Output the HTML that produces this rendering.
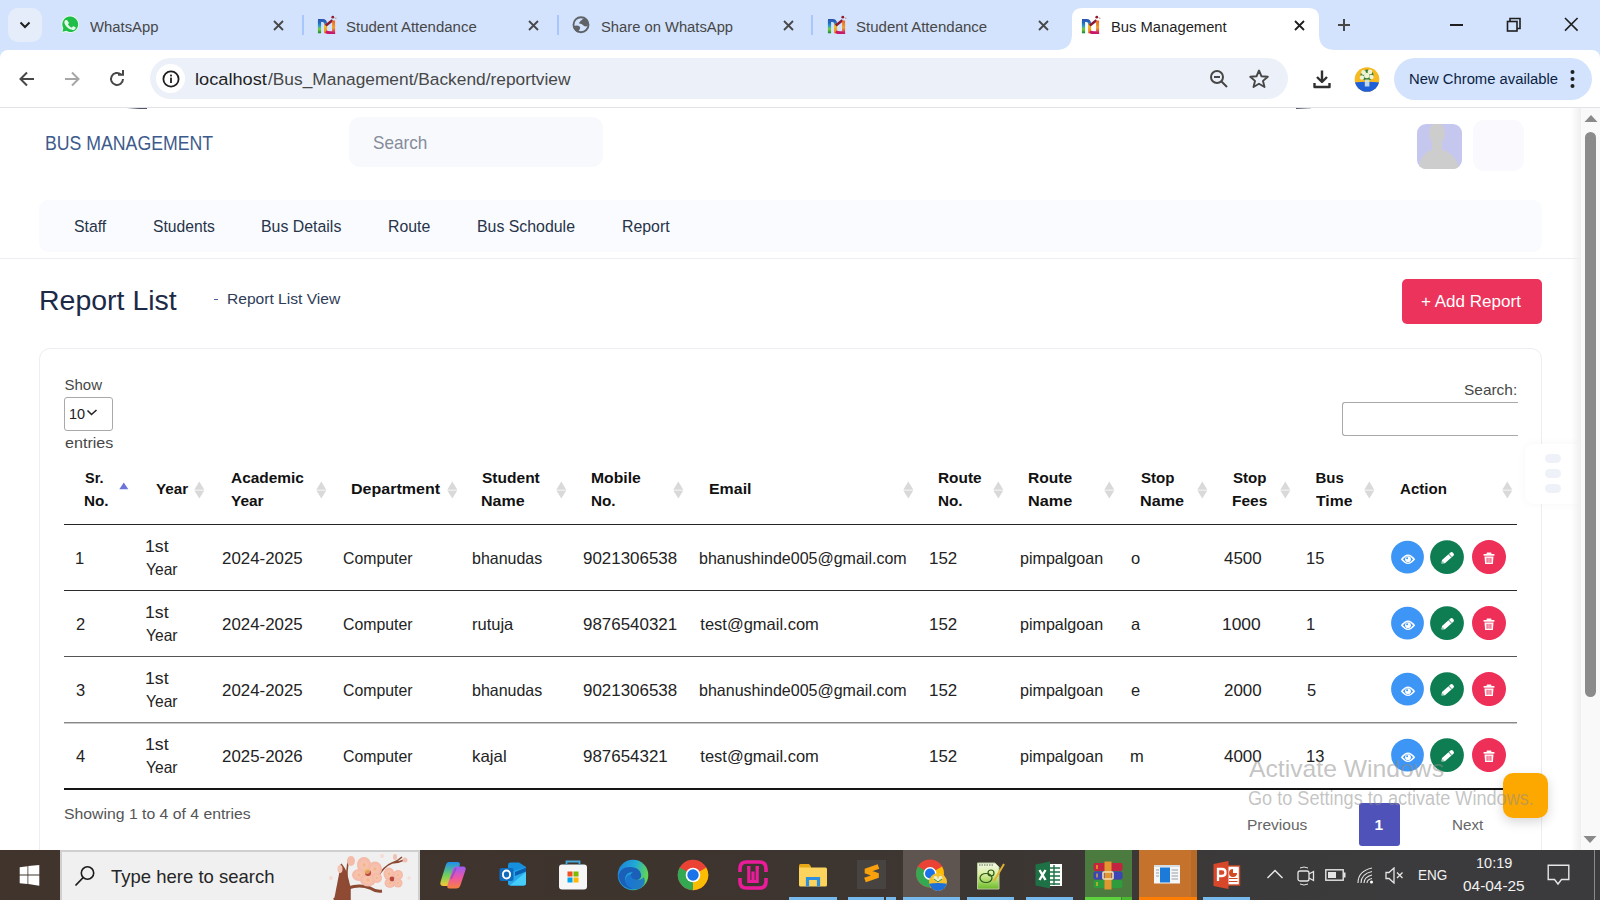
<!DOCTYPE html>
<html><head><meta charset="utf-8"><title>Bus Management</title>
<style>
html,body{margin:0;padding:0;width:1600px;height:900px;overflow:hidden;background:#fff;font-family:"Liberation Sans",sans-serif}
.ab{position:absolute;display:block}
.tx{position:absolute;white-space:nowrap;margin:0;padding:0}
</style></head><body>
<svg width="0" height="0" style="position:absolute"><defs><linearGradient id="gmv" x1="0" y1="5" x2="0" y2="18" gradientUnits="userSpaceOnUse"><stop offset="0" stop-color="#1d3f9a"/><stop offset=".45" stop-color="#2a9ad0"/><stop offset=".7" stop-color="#7ccf3a"/><stop offset="1" stop-color="#1f8a3a"/></linearGradient><linearGradient id="gmo" x1="0" y1="4" x2="0" y2="18" gradientUnits="userSpaceOnUse"><stop offset="0" stop-color="#2a4fb0"/><stop offset=".25" stop-color="#2a6fc0"/><stop offset=".5" stop-color="#f0c020"/><stop offset="1" stop-color="#f07a20"/></linearGradient><linearGradient id="gmr" x1="0" y1="5" x2="0" y2="18" gradientUnits="userSpaceOnUse"><stop offset="0" stop-color="#e8602a"/><stop offset=".6" stop-color="#f0a028"/><stop offset="1" stop-color="#c8186a"/></linearGradient></defs></svg>
<div class="ab" style="left:0;top:0;width:1600px;height:62px;background:#d3e3fd"></div>
<div class="ab" style="left:8px;top:8px;width:34px;height:34px;border-radius:10px;background:#e6edfa"></div>
<svg class="ab" style="left:19px;top:20px" width="12" height="10" viewBox="0 0 12 10"><path d="M1.5 2.5 L6 7 L10.5 2.5" fill="none" stroke="#1f1f1f" stroke-width="2"/></svg>
<svg class="ab" style="left:60px;top:14px" width="20" height="21" viewBox="0 0 20 21">
<path d="M10 1.6a8.7 8.7 0 0 0-7.6 12.9L1.5 19l4.6-1.1A8.7 8.7 0 1 0 10 1.6z" fill="#e6f8ea"/>
<path d="M10 2.6a7.7 7.7 0 0 0-6.7 11.5L2.6 17.7l3.7-.9A7.7 7.7 0 1 0 10 2.6z" fill="#1ebe48"/>
<path d="M7.3 6.4c-.3-.5-.5-.5-.8-.5h-.5c-.2 0-.5.1-.7.3-.3.3-.9.9-.9 2.2s1 2.6 1.1 2.8c.1.2 1.9 3 4.7 4.1 2.3.9 2.8.7 3.3.7.5-.1 1.6-.7 1.9-1.3.2-.7.2-1.2.2-1.3-.1-.1-.3-.2-.5-.3l-1.7-.8c-.2-.1-.4-.1-.6.1-.2.3-.7.8-.8 1-.2.2-.3.2-.5.1-.3-.1-1-.4-2-1.3-.8-.7-1.2-1.4-1.4-1.7-.1-.3 0-.4.1-.5l.4-.4c.1-.2.2-.3.3-.5.1-.2 0-.3 0-.4L7.3 6.4z" fill="#e6f8ea"/></svg>
<div class="tx" style="left:90.00px;top:18.06px;font-size:15.4px;line-height:17.202px;color:#474747;font-weight:400;font-family:'Liberation Sans',sans-serif;transform:scaleX(0.9653);transform-origin:0 0;">WhatsApp</div>
<svg class="ab" style="left:273.0px;top:19.5px" width="11" height="11" viewBox="-5.5 -5.5 11 11"><path d="M-4.5 -4.5L4.5 4.5M4.5 -4.5L-4.5 4.5" stroke="#474747" stroke-width="1.8" stroke-linecap="butt"/></svg>
<div class="ab" style="left:302px;top:15px;width:2px;height:20px;background:#a8c7fa"></div>
<svg class="ab" style="left:317px;top:15px" width="20" height="19" viewBox="0 0 20 19">
<path d="M2.5 18.3V5.5" stroke="url(#gmv)" stroke-width="3.2"/>
<path d="M1 5.5H5.5Q8.6 5.5 8.6 9V18.3" fill="none" stroke="url(#gmo)" stroke-width="3"/>
<path d="M8.8 10.5L15.5 5.2" stroke="#8e1b33" stroke-width="2.6"/>
<path d="M8.8 16.8Q12 18.5 18 17.2" fill="none" stroke="#c8186a" stroke-width="3"/>
<path d="M16.6 5.5V18.3" stroke="url(#gmr)" stroke-width="3"/>
<circle cx="15.8" cy="2.2" r="1.4" fill="#8e1b33"/><circle cx="18.8" cy="3.2" r="0.8" fill="#c89a80"/>
</svg>
<div class="tx" style="left:346.30px;top:18.06px;font-size:15.4px;line-height:17.202px;color:#474747;font-weight:400;font-family:'Liberation Sans',sans-serif;transform:scaleX(0.9729);transform-origin:0 0;">Student Attendance</div>
<svg class="ab" style="left:528.3px;top:19.5px" width="11" height="11" viewBox="-5.5 -5.5 11 11"><path d="M-4.5 -4.5L4.5 4.5M4.5 -4.5L-4.5 4.5" stroke="#474747" stroke-width="1.8" stroke-linecap="butt"/></svg>
<div class="ab" style="left:557px;top:15px;width:2px;height:20px;background:#a8c7fa"></div>
<svg class="ab" style="left:571px;top:15px" width="20" height="20" viewBox="0 0 20 20"><circle cx="10" cy="9.7" r="7.5" fill="none" stroke="#5f6368" stroke-width="1.9"/>
<path d="M7.8 8.2 Q9.5 5.5 11.5 4.2 Q14 2.8 16.5 5.5 Q18 8.5 16.6 11 Q14.5 12 12.8 10.8 Q11.5 9 7.8 8.2Z" fill="#5f6368"/><path d="M2.6 11.2 Q5.5 10 8.2 11 Q10 12.5 8.6 14.5 Q7.6 16.2 6.8 17.4 Q3.2 15.6 2.6 11.2Z" fill="#5f6368"/></svg>
<div class="tx" style="left:601.00px;top:18.06px;font-size:15.4px;line-height:17.202px;color:#474747;font-weight:400;font-family:'Liberation Sans',sans-serif;transform:scaleX(0.9586);transform-origin:0 0;">Share on WhatsApp</div>
<svg class="ab" style="left:783.0px;top:19.5px" width="11" height="11" viewBox="-5.5 -5.5 11 11"><path d="M-4.5 -4.5L4.5 4.5M4.5 -4.5L-4.5 4.5" stroke="#474747" stroke-width="1.8" stroke-linecap="butt"/></svg>
<div class="ab" style="left:811px;top:15px;width:2px;height:20px;background:#a8c7fa"></div>
<svg class="ab" style="left:827px;top:15px" width="20" height="19" viewBox="0 0 20 19">
<path d="M2.5 18.3V5.5" stroke="url(#gmv)" stroke-width="3.2"/>
<path d="M1 5.5H5.5Q8.6 5.5 8.6 9V18.3" fill="none" stroke="url(#gmo)" stroke-width="3"/>
<path d="M8.8 10.5L15.5 5.2" stroke="#8e1b33" stroke-width="2.6"/>
<path d="M8.8 16.8Q12 18.5 18 17.2" fill="none" stroke="#c8186a" stroke-width="3"/>
<path d="M16.6 5.5V18.3" stroke="url(#gmr)" stroke-width="3"/>
<circle cx="15.8" cy="2.2" r="1.4" fill="#8e1b33"/><circle cx="18.8" cy="3.2" r="0.8" fill="#c89a80"/>
</svg>
<div class="tx" style="left:856.00px;top:18.06px;font-size:15.4px;line-height:17.202px;color:#474747;font-weight:400;font-family:'Liberation Sans',sans-serif;transform:scaleX(0.9767);transform-origin:0 0;">Student Attendance</div>
<svg class="ab" style="left:1038.0px;top:19.5px" width="11" height="11" viewBox="-5.5 -5.5 11 11"><path d="M-4.5 -4.5L4.5 4.5M4.5 -4.5L-4.5 4.5" stroke="#474747" stroke-width="1.8" stroke-linecap="butt"/></svg>
<svg class="ab" style="left:1056px;top:8px" width="280" height="43" viewBox="0 0 280 43">
<path d="M0 42 Q8 42 12 38 Q16 34 16 26 V10 Q16 0 26 0 H253 Q263 0 263 10 V26 Q263 34 267 38 Q271 42 280 42 V43 H0Z" fill="#fff"/></svg>
<svg class="ab" style="left:1081px;top:15px" width="20" height="19" viewBox="0 0 20 19">
<path d="M2.5 18.3V5.5" stroke="url(#gmv)" stroke-width="3.2"/>
<path d="M1 5.5H5.5Q8.6 5.5 8.6 9V18.3" fill="none" stroke="url(#gmo)" stroke-width="3"/>
<path d="M8.8 10.5L15.5 5.2" stroke="#8e1b33" stroke-width="2.6"/>
<path d="M8.8 16.8Q12 18.5 18 17.2" fill="none" stroke="#c8186a" stroke-width="3"/>
<path d="M16.6 5.5V18.3" stroke="url(#gmr)" stroke-width="3"/>
<circle cx="15.8" cy="2.2" r="1.4" fill="#8e1b33"/><circle cx="18.8" cy="3.2" r="0.8" fill="#c89a80"/>
</svg>
<div class="tx" style="left:1110.64px;top:18.06px;font-size:15.4px;line-height:17.202px;color:#1f1f1f;font-weight:400;font-family:'Liberation Sans',sans-serif;transform:scaleX(0.9588);transform-origin:0 0;">Bus Management</div>
<svg class="ab" style="left:1293.5px;top:19.5px" width="11" height="11" viewBox="-5.5 -5.5 11 11"><path d="M-4.5 -4.5L4.5 4.5M4.5 -4.5L-4.5 4.5" stroke="#1f1f1f" stroke-width="1.8" stroke-linecap="butt"/></svg>
<svg class="ab" style="left:1337px;top:18px" width="14" height="14" viewBox="0 0 14 14"><path d="M7 1V13M1 7H13" stroke="#474747" stroke-width="2"/></svg>
<div class="ab" style="left:1450px;top:24px;width:13px;height:2px;background:#1f1f1f"></div>
<svg class="ab" style="left:1506px;top:17px" width="16" height="15" viewBox="0 0 16 15"><rect x="1.5" y="4.5" width="9.5" height="9.5" fill="none" stroke="#1f1f1f" stroke-width="1.6"/><path d="M4 4.5V1.5H14V11.5H11" fill="none" stroke="#1f1f1f" stroke-width="1.6"/></svg>
<svg class="ab" style="left:1564.0px;top:17.2px" width="14.6" height="14.6" viewBox="-7.3 -7.3 14.6 14.6"><path d="M-6.3 -6.3L6.3 6.3M6.3 -6.3L-6.3 6.3" stroke="#1f1f1f" stroke-width="1.6" stroke-linecap="butt"/></svg>
<div class="ab" style="left:0;top:50px;width:1600px;height:57px;background:#fff;border-radius:8px 8px 0 0"></div>
<div class="ab" style="left:0;top:107px;width:1600px;height:1px;background:#e1e3e6"></div>
<svg class="ab" style="left:18px;top:70px" width="18" height="18" viewBox="0 0 18 18"><path d="M16 9H3M9 2.5L2.5 9L9 15.5" fill="none" stroke="#474747" stroke-width="2"/></svg>
<svg class="ab" style="left:63px;top:70px" width="18" height="18" viewBox="0 0 18 18"><path d="M2 9H15M9 2.5L15.5 9L9 15.5" fill="none" stroke="#a6a6a6" stroke-width="2"/></svg>
<svg class="ab" style="left:108px;top:70px" width="18" height="18" viewBox="0 0 18 18"><path d="M15 9A6 6 0 1 1 13 4.5" fill="none" stroke="#474747" stroke-width="2"/><path d="M10 4.8H15V0" fill="none" stroke="#474747" stroke-width="2"/></svg>
<div class="ab" style="left:150px;top:58px;width:1138px;height:41px;border-radius:21px;background:#ecf1f9"></div>
<div class="ab" style="left:156px;top:64px;width:29px;height:29px;border-radius:50%;background:#fff"></div>
<svg class="ab" style="left:162px;top:70px" width="18" height="18" viewBox="0 0 18 18"><circle cx="9" cy="9" r="7.6" fill="none" stroke="#1f1f1f" stroke-width="1.8"/><rect x="8.1" y="7.6" width="1.8" height="5.4" fill="#1f1f1f"/><rect x="8.1" y="4.6" width="1.8" height="1.8" fill="#1f1f1f"/></svg>
<div class="tx" style="left:195.34px;top:70.23px;font-size:17.2px;line-height:19.212px;color:#1f1f1f;font-weight:400;font-family:'Liberation Sans',sans-serif;transform:scaleX(1.0588);transform-origin:0 0;">localhost</div>
<div class="tx" style="left:267.50px;top:70.23px;font-size:17.2px;line-height:19.212px;color:#474747;font-weight:400;font-family:'Liberation Sans',sans-serif;transform:scaleX(1.0081);transform-origin:0 0;">/Bus_Management/Backend/reportview</div>
<svg class="ab" style="left:1209px;top:69px" width="20" height="20" viewBox="0 0 20 20"><circle cx="8" cy="8" r="6" fill="none" stroke="#474747" stroke-width="2"/><path d="M12.5 12.5L18 18M5 8H11" stroke="#474747" stroke-width="2"/></svg>
<svg class="ab" style="left:1248px;top:68px" width="22" height="22" viewBox="0 0 22 22"><path d="M11 2.5L13.5 8.3L19.8 8.8L15 12.9L16.5 19L11 15.7L5.5 19L7 12.9L2.2 8.8L8.5 8.3Z" fill="none" stroke="#474747" stroke-width="1.9" stroke-linejoin="round"/></svg>
<svg class="ab" style="left:1311px;top:68px" width="22" height="22" viewBox="0 0 22 22"><path d="M11 2.5V13.5M6 9L11 14L16 9M3.5 15V19H18.5V15" fill="none" stroke="#303030" stroke-width="2.4" stroke-linejoin="round"/></svg>
<svg class="ab" style="left:1353.5px;top:66.5px" width="26" height="26" viewBox="0 0 26 26"><defs><clipPath id="ca"><circle cx="13" cy="12.5" r="12.3"/></clipPath></defs>
<g clip-path="url(#ca)"><rect width="26" height="26" fill="#f6b922"/><path d="M0 15.5 Q13 14 26 15.5 V26 H0Z" fill="#1f5fd8"/>
<ellipse cx="13" cy="8" rx="6.5" ry="5.5" fill="#3d7a2c"/><g fill="#eef3d6"><circle cx="9.5" cy="5.5" r="2.4"/><circle cx="16" cy="5" r="2.4"/><circle cx="12.8" cy="8.5" r="2.7"/><circle cx="8" cy="10.5" r="2.2"/><circle cx="17.5" cy="10" r="2.2"/></g>
<rect x="10.8" y="12.5" width="4.6" height="7" fill="#dcebe4" opacity=".85"/></g></svg>
<div class="ab" style="left:1394px;top:58px;width:198px;height:42px;border-radius:21px;background:#d3e3fd"></div>
<div class="tx" style="left:1408.74px;top:69.97px;font-size:15.5px;line-height:17.314px;color:#0b1f45;font-weight:400;font-family:'Liberation Sans',sans-serif;transform:scaleX(0.9559);transform-origin:0 0;">New Chrome available</div>
<svg class="ab" style="left:1569px;top:69px" width="7" height="20" viewBox="0 0 7 20"><circle cx="3.5" cy="3" r="2" fill="#1f1f1f"/><circle cx="3.5" cy="10" r="2" fill="#1f1f1f"/><circle cx="3.5" cy="17" r="2" fill="#1f1f1f"/></svg>
<div class="ab" style="left:127px;top:107.5px;width:20px;height:1.5px;background:linear-gradient(90deg,rgba(80,85,105,0),#50556a 60%,#50556a)"></div><div class="ab" style="left:1296px;top:107.5px;width:15px;height:1.5px;background:linear-gradient(90deg,#50556a,rgba(80,85,105,.2))"></div>
<div class="tx" style="left:45.42px;top:131.90px;font-size:20px;line-height:22.340px;color:#3d5a8c;font-weight:400;font-family:'Liberation Sans',sans-serif;transform:scaleX(0.8845);transform-origin:0 0;">BUS MANAGEMENT</div>
<div class="ab" style="left:349px;top:117px;width:254px;height:50px;border-radius:11px;background:#f8f9fd"></div>
<div class="tx" style="left:372.80px;top:132.66px;font-size:18.5px;line-height:20.665px;color:#868c9a;font-weight:400;font-family:'Liberation Sans',sans-serif;transform:scaleX(0.9258);transform-origin:0 0;">Search</div>
<svg class="ab" style="left:1417px;top:124px" width="45" height="45" viewBox="0 0 45 45"><defs><clipPath id="cav"><rect width="45" height="45" rx="9"/></clipPath></defs>
<g clip-path="url(#cav)"><rect width="45" height="45" fill="#c5c7ee"/><ellipse cx="20" cy="9.5" rx="7.8" ry="11" fill="#cdcdcd"/><path d="M1.5 46 Q3 27 20 24.5 Q38 27 43 46Z" fill="#cdcdcd"/><rect x="15" y="16" width="10" height="10" fill="#cdcdcd"/></g></svg>
<div class="ab" style="left:1473px;top:120px;width:51px;height:51px;border-radius:11px;background:#fafafe"></div>
<div class="ab" style="left:39px;top:200px;width:1503px;height:52px;border-radius:9px;background:#fafbfe"></div>
<div class="tx" style="left:73.50px;top:217.80px;font-size:16.8px;line-height:18.766px;color:#273449;font-weight:400;font-family:'Liberation Sans',sans-serif;transform:scaleX(0.9407);transform-origin:0 0;">Staff</div>
<div class="tx" style="left:152.50px;top:217.80px;font-size:16.8px;line-height:18.766px;color:#273449;font-weight:400;font-family:'Liberation Sans',sans-serif;transform:scaleX(0.9339);transform-origin:0 0;">Students</div>
<div class="tx" style="left:261.05px;top:217.80px;font-size:16.8px;line-height:18.766px;color:#273449;font-weight:400;font-family:'Liberation Sans',sans-serif;transform:scaleX(0.9463);transform-origin:0 0;">Bus Details</div>
<div class="tx" style="left:388.06px;top:217.80px;font-size:16.8px;line-height:18.766px;color:#273449;font-weight:400;font-family:'Liberation Sans',sans-serif;transform:scaleX(0.9437);transform-origin:0 0;">Route</div>
<div class="tx" style="left:477.05px;top:217.80px;font-size:16.8px;line-height:18.766px;color:#273449;font-weight:400;font-family:'Liberation Sans',sans-serif;transform:scaleX(0.9460);transform-origin:0 0;">Bus Schodule</div>
<div class="tx" style="left:621.55px;top:217.80px;font-size:16.8px;line-height:18.766px;color:#273449;font-weight:400;font-family:'Liberation Sans',sans-serif;transform:scaleX(0.9456);transform-origin:0 0;">Report</div>
<div class="ab" style="left:0;top:258px;width:1581px;height:1px;background:#eceef3"></div>
<div class="tx" style="left:38.63px;top:285.71px;font-size:27.5px;line-height:30.718px;color:#1c2a48;font-weight:400;font-family:'Liberation Sans',sans-serif;transform:scaleX(1.0355);transform-origin:0 0;">Report List</div>
<div class="ab" style="left:213.5px;top:298.5px;width:4.5px;height:1.5px;background:#4f64a8"></div>
<div class="tx" style="left:226.59px;top:289.97px;font-size:15.5px;line-height:17.314px;color:#2e3d58;font-weight:400;font-family:'Liberation Sans',sans-serif;transform:scaleX(1.0055);transform-origin:0 0;">Report List View</div>
<div class="ab" style="left:1402px;top:279px;width:140px;height:45px;border-radius:5px;background:#ec335b"></div>
<div class="tx" style="left:1421.00px;top:292.25px;font-size:17.4px;line-height:19.436px;color:#ffffff;font-weight:400;font-family:'Liberation Sans',sans-serif;transform:scaleX(0.9794);transform-origin:0 0;">+ Add Report</div>
<div class="ab" style="left:39px;top:348px;width:1501px;height:560px;border:1px solid #ededf4;border-radius:11px;background:#fff"></div>
<div class="tx" style="left:64.50px;top:376.93px;font-size:15px;line-height:16.755px;color:#474747;font-weight:400;font-family:'Liberation Sans',sans-serif;">Show</div>
<div class="ab" style="left:64px;top:397px;width:47px;height:32px;border:1px solid #a9a9a9;border-radius:3px;background:#fff"></div>
<div class="tx" style="left:68.87px;top:404.97px;font-size:15.5px;line-height:17.314px;color:#222;font-weight:400;font-family:'Liberation Sans',sans-serif;transform:scaleX(0.9326);transform-origin:0 0;">10</div>
<svg class="ab" style="left:86px;top:409px" width="12" height="8" viewBox="0 0 12 8"><path d="M1.5 1.5L5.5 5.5L10.5 1" fill="none" stroke="#222" stroke-width="1.6"/></svg>
<div class="tx" style="left:64.50px;top:435.23px;font-size:15px;line-height:16.755px;color:#474747;font-weight:400;font-family:'Liberation Sans',sans-serif;transform:scaleX(1.0736);transform-origin:0 0;">entries</div>
<div class="tx" style="left:1464.00px;top:382.03px;font-size:15px;line-height:16.755px;color:#474747;font-weight:400;font-family:'Liberation Sans',sans-serif;transform:scaleX(1.0292);transform-origin:0 0;">Search:</div>
<div class="ab" style="left:1342px;top:402px;width:175px;height:32px;border:1px solid #a9a9a9;border-right:none;border-radius:3px 0 0 3px;background:#fff"></div>
<div class="tx" style="left:85.00px;top:469.53px;font-size:15px;line-height:16.755px;color:#111;font-weight:700;font-family:'Liberation Sans',sans-serif;transform:scaleX(0.9624);transform-origin:0 0;">Sr.</div>
<div class="tx" style="left:83.98px;top:492.82px;font-size:15px;line-height:16.755px;color:#111;font-weight:700;font-family:'Liberation Sans',sans-serif;transform:scaleX(1.0176);transform-origin:0 0;">No.</div>
<div class="tx" style="left:155.60px;top:481.12px;font-size:15px;line-height:16.755px;color:#111;font-weight:700;font-family:'Liberation Sans',sans-serif;transform:scaleX(1.0138);transform-origin:0 0;">Year</div>
<div class="tx" style="left:230.60px;top:469.53px;font-size:15px;line-height:16.755px;color:#111;font-weight:700;font-family:'Liberation Sans',sans-serif;transform:scaleX(1.0280);transform-origin:0 0;">Academic</div>
<div class="tx" style="left:230.60px;top:492.82px;font-size:15px;line-height:16.755px;color:#111;font-weight:700;font-family:'Liberation Sans',sans-serif;transform:scaleX(1.0294);transform-origin:0 0;">Year</div>
<div class="tx" style="left:351.43px;top:481.12px;font-size:15px;line-height:16.755px;color:#111;font-weight:700;font-family:'Liberation Sans',sans-serif;transform:scaleX(1.0686);transform-origin:0 0;">Department</div>
<div class="tx" style="left:482.00px;top:469.53px;font-size:15px;line-height:16.755px;color:#111;font-weight:700;font-family:'Liberation Sans',sans-serif;transform:scaleX(1.0353);transform-origin:0 0;">Student</div>
<div class="tx" style="left:480.93px;top:492.82px;font-size:15px;line-height:16.755px;color:#111;font-weight:700;font-family:'Liberation Sans',sans-serif;transform:scaleX(1.0680);transform-origin:0 0;">Name</div>
<div class="tx" style="left:590.95px;top:469.53px;font-size:15px;line-height:16.755px;color:#111;font-weight:700;font-family:'Liberation Sans',sans-serif;transform:scaleX(1.0486);transform-origin:0 0;">Mobile</div>
<div class="tx" style="left:590.98px;top:492.82px;font-size:15px;line-height:16.755px;color:#111;font-weight:700;font-family:'Liberation Sans',sans-serif;transform:scaleX(1.0176);transform-origin:0 0;">No.</div>
<div class="tx" style="left:708.64px;top:481.12px;font-size:15px;line-height:16.755px;color:#111;font-weight:700;font-family:'Liberation Sans',sans-serif;transform:scaleX(1.0617);transform-origin:0 0;">Email</div>
<div class="tx" style="left:938.37px;top:469.53px;font-size:15px;line-height:16.755px;color:#111;font-weight:700;font-family:'Liberation Sans',sans-serif;transform:scaleX(1.0254);transform-origin:0 0;">Route</div>
<div class="tx" style="left:938.38px;top:492.82px;font-size:15px;line-height:16.755px;color:#111;font-weight:700;font-family:'Liberation Sans',sans-serif;transform:scaleX(1.0176);transform-origin:0 0;">No.</div>
<div class="tx" style="left:1028.36px;top:469.53px;font-size:15px;line-height:16.755px;color:#111;font-weight:700;font-family:'Liberation Sans',sans-serif;transform:scaleX(1.0400);transform-origin:0 0;">Route</div>
<div class="tx" style="left:1028.32px;top:492.82px;font-size:15px;line-height:16.755px;color:#111;font-weight:700;font-family:'Liberation Sans',sans-serif;transform:scaleX(1.0832);transform-origin:0 0;">Name</div>
<div class="tx" style="left:1140.70px;top:469.53px;font-size:15px;line-height:16.755px;color:#111;font-weight:700;font-family:'Liberation Sans',sans-serif;transform:scaleX(1.0072);transform-origin:0 0;">Stop</div>
<div class="tx" style="left:1139.62px;top:492.82px;font-size:15px;line-height:16.755px;color:#111;font-weight:700;font-family:'Liberation Sans',sans-serif;transform:scaleX(1.0781);transform-origin:0 0;">Name</div>
<div class="tx" style="left:1232.70px;top:469.53px;font-size:15px;line-height:16.755px;color:#111;font-weight:700;font-family:'Liberation Sans',sans-serif;transform:scaleX(1.0072);transform-origin:0 0;">Stop</div>
<div class="tx" style="left:1231.67px;top:492.82px;font-size:15px;line-height:16.755px;color:#111;font-weight:700;font-family:'Liberation Sans',sans-serif;transform:scaleX(1.0321);transform-origin:0 0;">Fees</div>
<div class="tx" style="left:1315.40px;top:469.53px;font-size:15px;line-height:16.755px;color:#111;font-weight:700;font-family:'Liberation Sans',sans-serif;">Bus</div>
<div class="tx" style="left:1316.40px;top:492.82px;font-size:15px;line-height:16.755px;color:#111;font-weight:700;font-family:'Liberation Sans',sans-serif;transform:scaleX(1.0466);transform-origin:0 0;">Time</div>
<div class="tx" style="left:1400.30px;top:481.12px;font-size:15px;line-height:16.755px;color:#111;font-weight:700;font-family:'Liberation Sans',sans-serif;transform:scaleX(1.0043);transform-origin:0 0;">Action</div>
<svg class="ab" style="left:119.3px;top:481.5px" width="10" height="17" viewBox="0 0 10 17"><path d="M0.3 7.2L4.8 0.6L9.3 7.2Z" fill="#6d74d9"/></svg>
<svg class="ab" style="left:194.2px;top:480.5px" width="11" height="18" viewBox="0 0 11 18"><path d="M0.3 8.7L5.3 0.6L10.3 8.7Z" fill="#d9d9d9"/><path d="M0.3 9.5L5.3 17.4L10.3 9.5Z" fill="#d9d9d9"/></svg>
<svg class="ab" style="left:315.7px;top:480.5px" width="11" height="18" viewBox="0 0 11 18"><path d="M0.3 8.7L5.3 0.6L10.3 8.7Z" fill="#d9d9d9"/><path d="M0.3 9.5L5.3 17.4L10.3 9.5Z" fill="#d9d9d9"/></svg>
<svg class="ab" style="left:446.7px;top:480.5px" width="11" height="18" viewBox="0 0 11 18"><path d="M0.3 8.7L5.3 0.6L10.3 8.7Z" fill="#d9d9d9"/><path d="M0.3 9.5L5.3 17.4L10.3 9.5Z" fill="#d9d9d9"/></svg>
<svg class="ab" style="left:555.7px;top:480.5px" width="11" height="18" viewBox="0 0 11 18"><path d="M0.3 8.7L5.3 0.6L10.3 8.7Z" fill="#d9d9d9"/><path d="M0.3 9.5L5.3 17.4L10.3 9.5Z" fill="#d9d9d9"/></svg>
<svg class="ab" style="left:672.7px;top:480.5px" width="11" height="18" viewBox="0 0 11 18"><path d="M0.3 8.7L5.3 0.6L10.3 8.7Z" fill="#d9d9d9"/><path d="M0.3 9.5L5.3 17.4L10.3 9.5Z" fill="#d9d9d9"/></svg>
<svg class="ab" style="left:902.5px;top:480.5px" width="11" height="18" viewBox="0 0 11 18"><path d="M0.3 8.7L5.3 0.6L10.3 8.7Z" fill="#d9d9d9"/><path d="M0.3 9.5L5.3 17.4L10.3 9.5Z" fill="#d9d9d9"/></svg>
<svg class="ab" style="left:993.1px;top:480.5px" width="11" height="18" viewBox="0 0 11 18"><path d="M0.3 8.7L5.3 0.6L10.3 8.7Z" fill="#d9d9d9"/><path d="M0.3 9.5L5.3 17.4L10.3 9.5Z" fill="#d9d9d9"/></svg>
<svg class="ab" style="left:1103.7px;top:480.5px" width="11" height="18" viewBox="0 0 11 18"><path d="M0.3 8.7L5.3 0.6L10.3 8.7Z" fill="#d9d9d9"/><path d="M0.3 9.5L5.3 17.4L10.3 9.5Z" fill="#d9d9d9"/></svg>
<svg class="ab" style="left:1196.7px;top:480.5px" width="11" height="18" viewBox="0 0 11 18"><path d="M0.3 8.7L5.3 0.6L10.3 8.7Z" fill="#d9d9d9"/><path d="M0.3 9.5L5.3 17.4L10.3 9.5Z" fill="#d9d9d9"/></svg>
<svg class="ab" style="left:1279.7px;top:480.5px" width="11" height="18" viewBox="0 0 11 18"><path d="M0.3 8.7L5.3 0.6L10.3 8.7Z" fill="#d9d9d9"/><path d="M0.3 9.5L5.3 17.4L10.3 9.5Z" fill="#d9d9d9"/></svg>
<svg class="ab" style="left:1364.1000000000001px;top:480.5px" width="11" height="18" viewBox="0 0 11 18"><path d="M0.3 8.7L5.3 0.6L10.3 8.7Z" fill="#d9d9d9"/><path d="M0.3 9.5L5.3 17.4L10.3 9.5Z" fill="#d9d9d9"/></svg>
<svg class="ab" style="left:1501.5px;top:480.5px" width="11" height="18" viewBox="0 0 11 18"><path d="M0.3 8.7L5.3 0.6L10.3 8.7Z" fill="#d9d9d9"/><path d="M0.3 9.5L5.3 17.4L10.3 9.5Z" fill="#d9d9d9"/></svg>
<div class="ab" style="left:64px;top:524px;width:1453px;height:1px;background:#262626"></div>
<div class="ab" style="left:64px;top:590px;width:1453px;height:1px;background:#2c2c2c"></div>
<div class="ab" style="left:64px;top:656px;width:1453px;height:1px;background:#555"></div>
<div class="ab" style="left:64px;top:722px;width:1453px;height:1px;background:#888"></div>
<div class="ab" style="left:64px;top:723px;width:1453px;height:1px;background:#c8c8c8"></div>
<div class="ab" style="left:64px;top:788px;width:1453px;height:2px;background:#151515"></div>
<div class="tx" style="left:75.00px;top:548.77px;font-size:16.5px;line-height:18.430px;color:#232323;font-weight:400;font-family:'Liberation Sans',sans-serif;">1</div>
<div class="tx" style="left:144.93px;top:537.17px;font-size:16.5px;line-height:18.430px;color:#232323;font-weight:400;font-family:'Liberation Sans',sans-serif;transform:scaleX(1.0734);transform-origin:0 0;">1st</div>
<div class="tx" style="left:146.00px;top:560.17px;font-size:16.5px;line-height:18.430px;color:#232323;font-weight:400;font-family:'Liberation Sans',sans-serif;transform:scaleX(0.9455);transform-origin:0 0;">Year</div>
<div class="tx" style="left:222.00px;top:548.77px;font-size:16.5px;line-height:18.430px;color:#232323;font-weight:400;font-family:'Liberation Sans',sans-serif;transform:scaleX(1.0225);transform-origin:0 0;">2024-2025</div>
<div class="tx" style="left:343.00px;top:548.77px;font-size:16.5px;line-height:18.430px;color:#232323;font-weight:400;font-family:'Liberation Sans',sans-serif;transform:scaleX(0.9596);transform-origin:0 0;">Computer</div>
<div class="tx" style="left:472.03px;top:548.77px;font-size:16.5px;line-height:18.430px;color:#232323;font-weight:400;font-family:'Liberation Sans',sans-serif;transform:scaleX(0.9686);transform-origin:0 0;">bhanudas</div>
<div class="tx" style="left:583.00px;top:548.77px;font-size:16.5px;line-height:18.430px;color:#232323;font-weight:400;font-family:'Liberation Sans',sans-serif;transform:scaleX(1.0263);transform-origin:0 0;">9021306538</div>
<div class="tx" style="left:699.33px;top:548.77px;font-size:16.5px;line-height:18.430px;color:#232323;font-weight:400;font-family:'Liberation Sans',sans-serif;transform:scaleX(0.9707);transform-origin:0 0;">bhanushinde005@gmail.com</div>
<div class="tx" style="left:928.98px;top:548.77px;font-size:16.5px;line-height:18.430px;color:#232323;font-weight:400;font-family:'Liberation Sans',sans-serif;transform:scaleX(1.0246);transform-origin:0 0;">152</div>
<div class="tx" style="left:1019.63px;top:548.77px;font-size:16.5px;line-height:18.430px;color:#232323;font-weight:400;font-family:'Liberation Sans',sans-serif;transform:scaleX(0.9746);transform-origin:0 0;">pimpalgoan</div>
<div class="tx" style="left:1131.00px;top:548.77px;font-size:16.5px;line-height:18.430px;color:#232323;font-weight:400;font-family:'Liberation Sans',sans-serif;">o</div>
<div class="tx" style="left:1223.50px;top:548.77px;font-size:16.5px;line-height:18.430px;color:#232323;font-weight:400;font-family:'Liberation Sans',sans-serif;transform:scaleX(1.0266);transform-origin:0 0;">4500</div>
<div class="tx" style="left:1306.00px;top:548.77px;font-size:16.5px;line-height:18.430px;color:#232323;font-weight:400;font-family:'Liberation Sans',sans-serif;">15</div>
<svg class="ab" style="left:1390px;top:540px" width="118" height="34" viewBox="0 0 118 34">
<circle cx="17.5" cy="17.1" r="16.4" fill="#3d95f5"/><circle cx="57" cy="17.1" r="16.9" fill="#0f7d52"/><circle cx="99" cy="17.1" r="17" fill="#ee2f58"/>
<path d="M10.8 19.2 Q18 9.7 25.2 19.2 Q18 28.7 10.8 19.2Z" fill="#fff"/><path d="M12.9 19.2 Q18 12.2 23.1 19.2 Q18 26.2 12.9 19.2Z" fill="#3d95f5"/><circle cx="18" cy="19.2" r="2.9" fill="#fff"/><circle cx="17.1" cy="18.3" r="1" fill="#3d95f5"/>
<g transform="translate(57.2 18.3) rotate(-42)"><path d="M-7.8 0 L-5 -2.2 H6.4 Q8 -2.2 8 -0.6 V0.6 Q8 2.2 6.4 2.2 H-5Z" fill="#fff"/><path d="M4 -2.4V2.4" stroke="#0f7d52" stroke-width="0.8"/><circle cx="-5.8" cy="0" r="0.6" fill="#0f7d52"/></g>
<rect x="93.6" y="14" width="10.8" height="1.7" fill="#fff"/><rect x="96.6" y="12.4" width="4.8" height="2" rx="0.6" fill="#fff"/><path d="M94.5 16.4H103.5L102.9 24.1H95.1Z" fill="#fff"/>
<path d="M97.1 17.8V22.8M99 17.8V22.8M100.9 17.8V22.8" stroke="#ee2f58" stroke-width="1"/></svg>
<div class="tx" style="left:76.00px;top:614.77px;font-size:16.5px;line-height:18.430px;color:#232323;font-weight:400;font-family:'Liberation Sans',sans-serif;">2</div>
<div class="tx" style="left:144.93px;top:603.17px;font-size:16.5px;line-height:18.430px;color:#232323;font-weight:400;font-family:'Liberation Sans',sans-serif;transform:scaleX(1.0734);transform-origin:0 0;">1st</div>
<div class="tx" style="left:146.00px;top:626.17px;font-size:16.5px;line-height:18.430px;color:#232323;font-weight:400;font-family:'Liberation Sans',sans-serif;transform:scaleX(0.9455);transform-origin:0 0;">Year</div>
<div class="tx" style="left:222.00px;top:614.77px;font-size:16.5px;line-height:18.430px;color:#232323;font-weight:400;font-family:'Liberation Sans',sans-serif;transform:scaleX(1.0225);transform-origin:0 0;">2024-2025</div>
<div class="tx" style="left:343.00px;top:614.77px;font-size:16.5px;line-height:18.430px;color:#232323;font-weight:400;font-family:'Liberation Sans',sans-serif;transform:scaleX(0.9596);transform-origin:0 0;">Computer</div>
<div class="tx" style="left:472.00px;top:614.77px;font-size:16.5px;line-height:18.430px;color:#232323;font-weight:400;font-family:'Liberation Sans',sans-serif;">rutuja</div>
<div class="tx" style="left:583.00px;top:614.77px;font-size:16.5px;line-height:18.430px;color:#232323;font-weight:400;font-family:'Liberation Sans',sans-serif;transform:scaleX(1.0263);transform-origin:0 0;">9876540321</div>
<div class="tx" style="left:700.30px;top:614.77px;font-size:16.5px;line-height:18.430px;color:#232323;font-weight:400;font-family:'Liberation Sans',sans-serif;">test@gmail.com</div>
<div class="tx" style="left:928.98px;top:614.77px;font-size:16.5px;line-height:18.430px;color:#232323;font-weight:400;font-family:'Liberation Sans',sans-serif;transform:scaleX(1.0246);transform-origin:0 0;">152</div>
<div class="tx" style="left:1019.63px;top:614.77px;font-size:16.5px;line-height:18.430px;color:#232323;font-weight:400;font-family:'Liberation Sans',sans-serif;transform:scaleX(0.9746);transform-origin:0 0;">pimpalgoan</div>
<div class="tx" style="left:1131.00px;top:614.77px;font-size:16.5px;line-height:18.430px;color:#232323;font-weight:400;font-family:'Liberation Sans',sans-serif;">a</div>
<div class="tx" style="left:1222.44px;top:614.77px;font-size:16.5px;line-height:18.430px;color:#232323;font-weight:400;font-family:'Liberation Sans',sans-serif;transform:scaleX(1.0555);transform-origin:0 0;">1000</div>
<div class="tx" style="left:1306.00px;top:614.77px;font-size:16.5px;line-height:18.430px;color:#232323;font-weight:400;font-family:'Liberation Sans',sans-serif;">1</div>
<svg class="ab" style="left:1390px;top:606px" width="118" height="34" viewBox="0 0 118 34">
<circle cx="17.5" cy="17.1" r="16.4" fill="#3d95f5"/><circle cx="57" cy="17.1" r="16.9" fill="#0f7d52"/><circle cx="99" cy="17.1" r="17" fill="#ee2f58"/>
<path d="M10.8 19.2 Q18 9.7 25.2 19.2 Q18 28.7 10.8 19.2Z" fill="#fff"/><path d="M12.9 19.2 Q18 12.2 23.1 19.2 Q18 26.2 12.9 19.2Z" fill="#3d95f5"/><circle cx="18" cy="19.2" r="2.9" fill="#fff"/><circle cx="17.1" cy="18.3" r="1" fill="#3d95f5"/>
<g transform="translate(57.2 18.3) rotate(-42)"><path d="M-7.8 0 L-5 -2.2 H6.4 Q8 -2.2 8 -0.6 V0.6 Q8 2.2 6.4 2.2 H-5Z" fill="#fff"/><path d="M4 -2.4V2.4" stroke="#0f7d52" stroke-width="0.8"/><circle cx="-5.8" cy="0" r="0.6" fill="#0f7d52"/></g>
<rect x="93.6" y="14" width="10.8" height="1.7" fill="#fff"/><rect x="96.6" y="12.4" width="4.8" height="2" rx="0.6" fill="#fff"/><path d="M94.5 16.4H103.5L102.9 24.1H95.1Z" fill="#fff"/>
<path d="M97.1 17.8V22.8M99 17.8V22.8M100.9 17.8V22.8" stroke="#ee2f58" stroke-width="1"/></svg>
<div class="tx" style="left:76.00px;top:680.77px;font-size:16.5px;line-height:18.430px;color:#232323;font-weight:400;font-family:'Liberation Sans',sans-serif;">3</div>
<div class="tx" style="left:144.93px;top:669.17px;font-size:16.5px;line-height:18.430px;color:#232323;font-weight:400;font-family:'Liberation Sans',sans-serif;transform:scaleX(1.0734);transform-origin:0 0;">1st</div>
<div class="tx" style="left:146.00px;top:692.17px;font-size:16.5px;line-height:18.430px;color:#232323;font-weight:400;font-family:'Liberation Sans',sans-serif;transform:scaleX(0.9455);transform-origin:0 0;">Year</div>
<div class="tx" style="left:222.00px;top:680.77px;font-size:16.5px;line-height:18.430px;color:#232323;font-weight:400;font-family:'Liberation Sans',sans-serif;transform:scaleX(1.0225);transform-origin:0 0;">2024-2025</div>
<div class="tx" style="left:343.00px;top:680.77px;font-size:16.5px;line-height:18.430px;color:#232323;font-weight:400;font-family:'Liberation Sans',sans-serif;transform:scaleX(0.9596);transform-origin:0 0;">Computer</div>
<div class="tx" style="left:472.03px;top:680.77px;font-size:16.5px;line-height:18.430px;color:#232323;font-weight:400;font-family:'Liberation Sans',sans-serif;transform:scaleX(0.9686);transform-origin:0 0;">bhanudas</div>
<div class="tx" style="left:583.00px;top:680.77px;font-size:16.5px;line-height:18.430px;color:#232323;font-weight:400;font-family:'Liberation Sans',sans-serif;transform:scaleX(1.0263);transform-origin:0 0;">9021306538</div>
<div class="tx" style="left:699.33px;top:680.77px;font-size:16.5px;line-height:18.430px;color:#232323;font-weight:400;font-family:'Liberation Sans',sans-serif;transform:scaleX(0.9707);transform-origin:0 0;">bhanushinde005@gmail.com</div>
<div class="tx" style="left:928.98px;top:680.77px;font-size:16.5px;line-height:18.430px;color:#232323;font-weight:400;font-family:'Liberation Sans',sans-serif;transform:scaleX(1.0246);transform-origin:0 0;">152</div>
<div class="tx" style="left:1019.63px;top:680.77px;font-size:16.5px;line-height:18.430px;color:#232323;font-weight:400;font-family:'Liberation Sans',sans-serif;transform:scaleX(0.9746);transform-origin:0 0;">pimpalgoan</div>
<div class="tx" style="left:1131.00px;top:680.77px;font-size:16.5px;line-height:18.430px;color:#232323;font-weight:400;font-family:'Liberation Sans',sans-serif;">e</div>
<div class="tx" style="left:1223.50px;top:680.77px;font-size:16.5px;line-height:18.430px;color:#232323;font-weight:400;font-family:'Liberation Sans',sans-serif;transform:scaleX(1.0266);transform-origin:0 0;">2000</div>
<div class="tx" style="left:1307.00px;top:680.77px;font-size:16.5px;line-height:18.430px;color:#232323;font-weight:400;font-family:'Liberation Sans',sans-serif;">5</div>
<svg class="ab" style="left:1390px;top:672px" width="118" height="34" viewBox="0 0 118 34">
<circle cx="17.5" cy="17.1" r="16.4" fill="#3d95f5"/><circle cx="57" cy="17.1" r="16.9" fill="#0f7d52"/><circle cx="99" cy="17.1" r="17" fill="#ee2f58"/>
<path d="M10.8 19.2 Q18 9.7 25.2 19.2 Q18 28.7 10.8 19.2Z" fill="#fff"/><path d="M12.9 19.2 Q18 12.2 23.1 19.2 Q18 26.2 12.9 19.2Z" fill="#3d95f5"/><circle cx="18" cy="19.2" r="2.9" fill="#fff"/><circle cx="17.1" cy="18.3" r="1" fill="#3d95f5"/>
<g transform="translate(57.2 18.3) rotate(-42)"><path d="M-7.8 0 L-5 -2.2 H6.4 Q8 -2.2 8 -0.6 V0.6 Q8 2.2 6.4 2.2 H-5Z" fill="#fff"/><path d="M4 -2.4V2.4" stroke="#0f7d52" stroke-width="0.8"/><circle cx="-5.8" cy="0" r="0.6" fill="#0f7d52"/></g>
<rect x="93.6" y="14" width="10.8" height="1.7" fill="#fff"/><rect x="96.6" y="12.4" width="4.8" height="2" rx="0.6" fill="#fff"/><path d="M94.5 16.4H103.5L102.9 24.1H95.1Z" fill="#fff"/>
<path d="M97.1 17.8V22.8M99 17.8V22.8M100.9 17.8V22.8" stroke="#ee2f58" stroke-width="1"/></svg>
<div class="tx" style="left:76.00px;top:746.77px;font-size:16.5px;line-height:18.430px;color:#232323;font-weight:400;font-family:'Liberation Sans',sans-serif;">4</div>
<div class="tx" style="left:144.93px;top:735.17px;font-size:16.5px;line-height:18.430px;color:#232323;font-weight:400;font-family:'Liberation Sans',sans-serif;transform:scaleX(1.0734);transform-origin:0 0;">1st</div>
<div class="tx" style="left:146.00px;top:758.17px;font-size:16.5px;line-height:18.430px;color:#232323;font-weight:400;font-family:'Liberation Sans',sans-serif;transform:scaleX(0.9455);transform-origin:0 0;">Year</div>
<div class="tx" style="left:222.00px;top:746.77px;font-size:16.5px;line-height:18.430px;color:#232323;font-weight:400;font-family:'Liberation Sans',sans-serif;transform:scaleX(1.0225);transform-origin:0 0;">2025-2026</div>
<div class="tx" style="left:343.00px;top:746.77px;font-size:16.5px;line-height:18.430px;color:#232323;font-weight:400;font-family:'Liberation Sans',sans-serif;transform:scaleX(0.9596);transform-origin:0 0;">Computer</div>
<div class="tx" style="left:471.98px;top:746.77px;font-size:16.5px;line-height:18.430px;color:#232323;font-weight:400;font-family:'Liberation Sans',sans-serif;transform:scaleX(1.0227);transform-origin:0 0;">kajal</div>
<div class="tx" style="left:583.00px;top:746.77px;font-size:16.5px;line-height:18.430px;color:#232323;font-weight:400;font-family:'Liberation Sans',sans-serif;transform:scaleX(1.0265);transform-origin:0 0;">987654321</div>
<div class="tx" style="left:700.30px;top:746.77px;font-size:16.5px;line-height:18.430px;color:#232323;font-weight:400;font-family:'Liberation Sans',sans-serif;">test@gmail.com</div>
<div class="tx" style="left:928.98px;top:746.77px;font-size:16.5px;line-height:18.430px;color:#232323;font-weight:400;font-family:'Liberation Sans',sans-serif;transform:scaleX(1.0246);transform-origin:0 0;">152</div>
<div class="tx" style="left:1019.63px;top:746.77px;font-size:16.5px;line-height:18.430px;color:#232323;font-weight:400;font-family:'Liberation Sans',sans-serif;transform:scaleX(0.9746);transform-origin:0 0;">pimpalgoan</div>
<div class="tx" style="left:1130.00px;top:746.77px;font-size:16.5px;line-height:18.430px;color:#232323;font-weight:400;font-family:'Liberation Sans',sans-serif;">m</div>
<div class="tx" style="left:1223.50px;top:746.77px;font-size:16.5px;line-height:18.430px;color:#232323;font-weight:400;font-family:'Liberation Sans',sans-serif;transform:scaleX(1.0266);transform-origin:0 0;">4000</div>
<div class="tx" style="left:1306.00px;top:746.77px;font-size:16.5px;line-height:18.430px;color:#232323;font-weight:400;font-family:'Liberation Sans',sans-serif;">13</div>
<svg class="ab" style="left:1390px;top:738px" width="118" height="34" viewBox="0 0 118 34">
<circle cx="17.5" cy="17.1" r="16.4" fill="#3d95f5"/><circle cx="57" cy="17.1" r="16.9" fill="#0f7d52"/><circle cx="99" cy="17.1" r="17" fill="#ee2f58"/>
<path d="M10.8 19.2 Q18 9.7 25.2 19.2 Q18 28.7 10.8 19.2Z" fill="#fff"/><path d="M12.9 19.2 Q18 12.2 23.1 19.2 Q18 26.2 12.9 19.2Z" fill="#3d95f5"/><circle cx="18" cy="19.2" r="2.9" fill="#fff"/><circle cx="17.1" cy="18.3" r="1" fill="#3d95f5"/>
<g transform="translate(57.2 18.3) rotate(-42)"><path d="M-7.8 0 L-5 -2.2 H6.4 Q8 -2.2 8 -0.6 V0.6 Q8 2.2 6.4 2.2 H-5Z" fill="#fff"/><path d="M4 -2.4V2.4" stroke="#0f7d52" stroke-width="0.8"/><circle cx="-5.8" cy="0" r="0.6" fill="#0f7d52"/></g>
<rect x="93.6" y="14" width="10.8" height="1.7" fill="#fff"/><rect x="96.6" y="12.4" width="4.8" height="2" rx="0.6" fill="#fff"/><path d="M94.5 16.4H103.5L102.9 24.1H95.1Z" fill="#fff"/>
<path d="M97.1 17.8V22.8M99 17.8V22.8M100.9 17.8V22.8" stroke="#ee2f58" stroke-width="1"/></svg>
<div class="tx" style="left:64.30px;top:804.77px;font-size:15.5px;line-height:17.314px;color:#555;font-weight:400;font-family:'Liberation Sans',sans-serif;transform:scaleX(1.0175);transform-origin:0 0;">Showing 1 to 4 of 4 entries</div>
<div class="tx" style="left:1247.00px;top:815.97px;font-size:15.5px;line-height:17.314px;color:#666;font-weight:400;font-family:'Liberation Sans',sans-serif;">Previous</div>
<div class="ab" style="left:1359px;top:802.5px;width:41px;height:43px;border-radius:3px;background:#4f53b9"></div>
<div class="tx" style="left:1374.50px;top:815.97px;font-size:15.5px;line-height:17.314px;color:#fff;font-weight:700;font-family:'Liberation Sans',sans-serif;">1</div>
<div class="tx" style="left:1451.52px;top:815.97px;font-size:15.5px;line-height:17.314px;color:#666;font-weight:400;font-family:'Liberation Sans',sans-serif;transform:scaleX(0.9821);transform-origin:0 0;">Next</div>
<div class="ab" style="left:1502.5px;top:772.5px;width:45px;height:45px;border-radius:10px;background:#fda800;box-shadow:0 4px 12px rgba(0,0,0,.16)"></div>
<div class="tx" style="left:1248.80px;top:756.28px;font-size:24px;line-height:26.808px;color:rgba(140,140,140,.52);font-weight:400;font-family:'Liberation Sans',sans-serif;transform:scaleX(1.0296);transform-origin:0 0;">Activate Windows</div>
<div class="tx" style="left:1248.00px;top:787.55px;font-size:19.5px;line-height:21.782px;color:rgba(140,140,140,.52);font-weight:400;font-family:'Liberation Sans',sans-serif;transform:scaleX(0.9285);transform-origin:0 0;">Go to Settings to activate Windows.</div>
<div class="ab" style="left:1525px;top:444px;width:60px;height:60px;border-radius:8px 0 0 8px;background:#fff;box-shadow:0 0 8px rgba(0,0,0,.04)"></div>
<div class="ab" style="left:1545px;top:454px;width:16px;height:9px;border-radius:5px;background:#eef1f7"></div>
<div class="ab" style="left:1545px;top:469px;width:16px;height:9px;border-radius:5px;background:#eef1f7"></div>
<div class="ab" style="left:1545px;top:484px;width:16px;height:9px;border-radius:5px;background:#eef1f7"></div>
<div class="ab" style="left:1571px;top:108px;width:10px;height:742px;background:linear-gradient(90deg,rgba(240,240,240,0),#efefef)"></div>
<div class="ab" style="left:1581px;top:108px;width:19px;height:742px;background:#f9f9f9"></div>
<svg class="ab" style="left:1584px;top:114px" width="14" height="9" viewBox="0 0 14 9"><path d="M0.5 8L7 1L13.5 8Z" fill="#8a8a8a"/></svg>
<div class="ab" style="left:1585px;top:131.5px;width:11px;height:565px;border-radius:5.5px;background:#8b8b8b"></div>
<svg class="ab" style="left:1583px;top:835px" width="14" height="9" viewBox="0 0 14 9"><path d="M0.5 1L7 8L13.5 1Z" fill="#8a8a8a"/></svg>
<div class="ab" style="left:0;top:850px;width:1600px;height:50px;background:linear-gradient(90deg,#40342c 0%,#3e342e 40%,#3c3632 62%,#3b3a3b 80%,#3b3b3e 100%)"></div>
<svg class="ab" style="left:19px;top:864.5px" width="22" height="22" viewBox="0 0 22 22"><path d="M0.7 2.2L8.5 1.2V9.6H0.7Z M9.3 1.1L20.3 0V9.6H9.3Z M0.7 10.4H8.5V19L0.7 18.2Z M9.3 10.4H20.3V20.8L9.3 19.1Z" fill="#fff"/></svg>
<div class="ab" style="left:60px;top:850px;width:360px;height:50px;background:#f0f0f0;border:2px solid #cfcfcf;border-bottom:none;box-sizing:border-box"></div>
<svg class="ab" style="left:73px;top:864px" width="24" height="24" viewBox="0 0 24 24"><circle cx="14.5" cy="9" r="6.2" fill="none" stroke="#1b1b1b" stroke-width="1.6"/><path d="M10.2 13.5L2.5 21.5" stroke="#1b1b1b" stroke-width="1.8"/></svg>
<div class="tx" style="left:110.80px;top:866.30px;font-size:19px;line-height:21.223px;color:#262626;font-weight:400;font-family:'Liberation Sans',sans-serif;transform:scaleX(0.9739);transform-origin:0 0;">Type here to search</div>
<svg class="ab" style="left:320px;top:850px" width="100" height="50" viewBox="0 0 100 50">
<defs><radialGradient id="pt" cx=".5" cy=".5" r=".5"><stop offset="0" stop-color="#f2b078"/><stop offset=".35" stop-color="#f6c4ae"/><stop offset="1" stop-color="#f4b7a6"/></radialGradient></defs>
<path d="M14 50 Q24 42 28 38 Q40 34 50 38 Q56 42 62 41" fill="none" stroke="#8c4a32" stroke-width="3"/>
<path d="M14 50 L30 50 L30 38 Q28 30 26 22 Q24 18 21 14" fill="#8f4a34" stroke="#8c4a32" stroke-width="1.5"/>
<path d="M27 36 Q26 20 29 8" fill="none" stroke="#8c4a32" stroke-width="1.6"/>
<path d="M57 28 Q64 16 72 13 Q78 11 82 7 M72 13 Q78 13 84 10" fill="none" stroke="#8c4a32" stroke-width="1.5"/>
<ellipse cx="31" cy="11" rx="4" ry="5" fill="#f4bca8"/><ellipse cx="20" cy="19" rx="2.5" ry="4" fill="#f4c4b6"/><ellipse cx="75" cy="7" rx="2" ry="3" fill="#f0c0b4"/><ellipse cx="85" cy="10" rx="2.5" ry="2.5" fill="#f0c0b4"/>
<g fill="url(#pt)"><ellipse cx="44" cy="15" rx="7" ry="8"/><ellipse cx="55" cy="19" rx="7" ry="7.5"/><ellipse cx="39" cy="25" rx="7" ry="6"/><ellipse cx="48" cy="30" rx="8" ry="6.5"/><ellipse cx="57" cy="28" rx="5" ry="5"/></g>
<circle cx="48" cy="23" r="3" fill="#b8483a"/><circle cx="47" cy="21" r="3" fill="#f4c070" opacity=".7"/>
<g fill="url(#pt)"><ellipse cx="69" cy="24" rx="5.5" ry="6.5"/><ellipse cx="78" cy="25" rx="5" ry="5"/><ellipse cx="70" cy="33" rx="5.5" ry="5"/><ellipse cx="78" cy="33" rx="4.5" ry="4.5"/></g>
<circle cx="72" cy="29" r="2.4" fill="#b8483a"/>
<g fill="#f6dcd6"><circle cx="11" cy="28" r="2"/><circle cx="62" cy="6" r="2"/><circle cx="89" cy="28" r="1.8"/></g></svg>
<svg class="ab" style="left:437.0px;top:859.0px" width="32" height="32" viewBox="0 0 32 32"><defs><linearGradient id="cpl" x1="0" y1="0" x2="0" y2="1"><stop offset="0" stop-color="#1f8ef0"/><stop offset=".55" stop-color="#6fd05a"/><stop offset="1" stop-color="#f7c936"/></linearGradient><linearGradient id="cpr" x1="0" y1="0" x2="0" y2="1"><stop offset="0" stop-color="#9a5cf2"/><stop offset=".5" stop-color="#ee55a8"/><stop offset="1" stop-color="#f7823c"/></linearGradient></defs><path d="M12 3H20Q24 3 22.5 7L17 24Q16 27 12 27H6.5Q2.5 27 3.5 23L8.5 7Q9.5 3 12 3Z" fill="url(#cpl)"/><path d="M19.5 7.5H26Q29.5 7.5 28.5 11L23.5 26Q22.5 29.5 19 29.5H12.5Q9.5 29.5 10.5 26L15.5 11Q16.5 7.5 19.5 7.5Z" fill="url(#cpr)"/><path d="M14 20L19 9" stroke="#5b3cc4" stroke-width="1.5" opacity=".5"/></svg>
<svg class="ab" style="left:497.0px;top:859.0px" width="32" height="32" viewBox="0 0 32 32"><path d="M11 6Q11 3.5 13.5 3.5H22L29 8V24Q29 26.5 26.5 26.5H13.5Q11 26.5 11 24Z" fill="#1490df"/><path d="M11 14L29 8V24Q29 26.5 26.5 26.5H13.5Q11 26.5 11 24Z" fill="#28a8ea"/><path d="M13 26.5L29 13V24Q29 26.5 26.5 26.5Z" fill="#50d9ff" opacity=".75"/><path d="M18 13L29 8.5V12.5L18 17Z" fill="#0a5fb0"/><rect x="2.5" y="9" width="14" height="13" rx="2" fill="#0f6cbd"/><ellipse cx="9.5" cy="15.5" rx="3.6" ry="4" fill="none" stroke="#fff" stroke-width="1.9"/></svg>
<svg class="ab" style="left:557.0px;top:859.0px" width="32" height="32" viewBox="0 0 32 32"><rect x="2" y="5.5" width="28" height="25" rx="3" fill="#f6f6f6"/><path d="M9.5 6V2.5H22.5V6" fill="none" stroke="#49a6d8" stroke-width="1.8"/><rect x="10.5" y="12.5" width="5" height="5" fill="#f25022"/><rect x="16.5" y="12.5" width="5" height="5" fill="#7fba00"/><rect x="10.5" y="18.5" width="5" height="5" fill="#00a4ef"/><rect x="16.5" y="18.5" width="5" height="5" fill="#ffb900"/></svg>
<svg class="ab" style="left:617.0px;top:859.0px" width="32" height="32" viewBox="0 0 32 32"><defs><linearGradient id="eg" x1="0" y1="0" x2="1" y2="0.3"><stop offset="0" stop-color="#1f7fd8"/><stop offset=".55" stop-color="#1fa8d8"/><stop offset="1" stop-color="#5ed45a"/></linearGradient></defs><circle cx="16" cy="16" r="15.3" fill="url(#eg)"/><path d="M1.5 17Q3 8 13 8Q22 8 24 15Q25 20 20 21Q15 21 14 18Q13 15 16 13Q9 13 8 19Q8 27 17 30.5Q4 30 1.5 17Z" fill="#1a5fb8"/><path d="M14 18Q15 21 20 21Q25 21 27 18Q30 26 22 30Q16 31.5 11 28Q7 24 9 19Q10 16 14 15Z" fill="#1a6fd0" opacity=".85"/></svg>
<svg class="ab" style="left:677.2px;top:859.0px" width="32" height="32" viewBox="0 0 32 32"><circle cx="16" cy="16" r="15.2" fill="#ea4335"/><path d="M16 16L29.2 8.4A15.2 15.2 0 0 1 16 31.2Z" fill="#fbbc04"/><path d="M16 16L16 31.2A15.2 15.2 0 0 1 2.8 8.4Z" fill="#34a853"/><path d="M16 16L29.2 8.4L16 8.4Z" fill="#ea4335"/><path d="M16 16L2.8 8.4" stroke="#ea4335" stroke-width="0"/><circle cx="16" cy="16" r="7.3" fill="#fff"/><circle cx="16" cy="16" r="5.7" fill="#1a73e8"/></svg>
<svg class="ab" style="left:737.3px;top:859.0px" width="32" height="32" viewBox="0 0 32 32"><path d="M3 13V9.5Q3 3 9.5 3H22.5Q29 3 29 9.5V13 M3 19V22.5Q3 29 9.5 29H22.5Q29 29 29 22.5V19" fill="none" stroke="#ea1c9a" stroke-width="3.6"/><path d="M10 8.5H13.5 M18.5 8.5H22 M11.8 8.5V22.5H20.2V8.5 M16 12.5V22.5" fill="none" stroke="#ea1c9a" stroke-width="3.2"/></svg>
<svg class="ab" style="left:796.5px;top:859.0px" width="32" height="32" viewBox="0 0 32 32"><path d="M2 6.5Q2 5 3.5 5H12L14 7.5V10H2Z" fill="#e6a817"/><path d="M2 8.5H28.5Q30 8.5 30 10V26Q30 27.5 28.5 27.5H3.5Q2 27.5 2 26Z" fill="#fcd35d"/><path d="M10.5 27.5V19.5H21.5V27.5" fill="none" stroke="#2f8fdf" stroke-width="3.2"/></svg>
<div class="ab" style="left:789px;top:897px;width:48px;height:3px;background:#76b9ed"></div>
<div class="ab" style="left:857px;top:860px;width:29px;height:29px;background:#474341"></div>
<svg class="ab" style="left:855.5px;top:859.0px" width="32" height="32" viewBox="0 0 32 32"><path d="M22.5 7.5L9.5 12L22 16.5L9 21" fill="none" stroke="#f9a00d" stroke-width="5" stroke-linejoin="miter" stroke-miterlimit="2"/></svg>
<div class="ab" style="left:848px;top:897px;width:36px;height:3px;background:#76b9ed"></div>
<div class="ab" style="left:886px;top:897px;width:10px;height:3px;background:#76b9ed"></div>
<div class="ab" style="left:903px;top:850px;width:57px;height:50px;background:#5e5550"></div>
<svg class="ab" style="left:915.0px;top:859.0px" width="32" height="32" viewBox="0 0 32 32"><circle cx="15" cy="14.5" r="14" fill="#ea4335"/><path d="M15 14.5L27.1 7.5A14 14 0 0 1 15 28.5Z" fill="#fbbc04"/><path d="M15 14.5L15 28.5A14 14 0 0 1 2.9 7.5Z" fill="#34a853"/><circle cx="15" cy="14.5" r="6.5" fill="#fff"/><circle cx="15" cy="14.5" r="5" fill="#1a73e8"/><defs><clipPath id="cav2"><circle cx="23" cy="23" r="9"/></clipPath></defs><g clip-path="url(#cav2)"><rect x="13" y="13" width="20" height="20" fill="#f6c12f"/><path d="M13 25Q23 23 33 25V33H13Z" fill="#1f6fd8"/><circle cx="20.5" cy="19" r="2" fill="#e8f0d0"/><circle cx="25.5" cy="19" r="2" fill="#e8f0d0"/><circle cx="23" cy="21.5" r="2" fill="#e8f0d0"/><path d="M19 20L23 23L27 20" stroke="#4a8a2a" stroke-width="1" fill="none"/></g></svg>
<div class="ab" style="left:903px;top:897px;width:57px;height:3px;background:#76b9ed"></div>
<svg class="ab" style="left:973.5px;top:859.0px" width="32" height="32" viewBox="0 0 32 32"><defs><linearGradient id="npg" x1="0" y1="0" x2="0" y2="1"><stop offset="0" stop-color="#f4f8ee"/><stop offset=".45" stop-color="#d8ee9a"/><stop offset="1" stop-color="#6cbb2a"/></linearGradient></defs><path d="M3.5 4H21L25 8V30H3.5Z" fill="url(#npg)" stroke="#b8c89a" stroke-width="1"/><path d="M5 6H20" stroke="#8a9a70" stroke-width="1.5" stroke-dasharray="1.5 1"/><ellipse cx="12" cy="19" rx="6" ry="4.5" fill="none" stroke="#2e5a1a" stroke-width="1.2"/><circle cx="17" cy="14" r="3" fill="none" stroke="#2e5a1a" stroke-width="1.2"/><path d="M20 22L30 5" stroke="#e0b030" stroke-width="2"/></svg>
<div class="ab" style="left:967px;top:897px;width:47px;height:3px;background:#76b9ed"></div>
<svg class="ab" style="left:1033.0px;top:859.0px" width="32" height="32" viewBox="0 0 32 32"><rect x="14" y="5" width="15" height="22" fill="#fff"/><path d="M16.5 9H27M16.5 13H27M16.5 17H27M16.5 21H27M16.5 25H27M21 6V26" stroke="#1e7145" stroke-width="1.4"/><path d="M2.5 5.5L17 2.5V29.5L2.5 26.5Z" fill="#1e7145"/><path d="M6.5 11L12.5 21M12.5 11L6.5 21" stroke="#fff" stroke-width="2.4"/></svg>
<div class="ab" style="left:1026px;top:897px;width:47px;height:3px;background:#76b9ed"></div>
<div class="ab" style="left:1085px;top:850px;width:47px;height:50px;background:#4b7b3f"></div>
<svg class="ab" style="left:1092.2px;top:859.0px" width="32" height="32" viewBox="0 0 32 32"><rect x="1.5" y="4" width="29" height="8" rx="2" fill="#c3243f"/><rect x="1.5" y="12.5" width="29" height="8" rx="2" fill="#3b45b5"/><rect x="1.5" y="21" width="29" height="8" rx="2" fill="#2e9c3d"/><path d="M5 6V10M5 14.5V18.5M5 23V27" stroke="#f4c020" stroke-width="1.2"/><rect x="12.5" y="2.5" width="7" height="28" fill="#e39530"/><rect x="11" y="13" width="10" height="7" rx="1" fill="none" stroke="#f8e0b0" stroke-width="1.6"/></svg>
<div class="ab" style="left:1085px;top:897px;width:36px;height:3px;background:#5cd23c"></div>
<div class="ab" style="left:1122px;top:897px;width:10px;height:3px;background:#4bb832"></div>
<div class="ab" style="left:1139px;top:850px;width:58px;height:50px;background:#c4722c"></div>
<div class="ab" style="left:1191px;top:850px;width:6px;height:50px;background:#b86a28"></div>
<svg class="ab" style="left:1150.7px;top:859.0px" width="32" height="32" viewBox="0 0 32 32"><rect x="3" y="6" width="26" height="18.5" fill="#f4f6f8"/><rect x="3" y="6" width="26" height="2" fill="#d8dde2"/><rect x="9" y="8.5" width="10" height="15" fill="#1c7ad8"/><path d="M5 11H8M5 14H8M5 17H8M20.5 11H27M20.5 14H27M20.5 17H27M20.5 20H27" stroke="#9aa0a6" stroke-width="1"/></svg>
<div class="ab" style="left:1139px;top:897px;width:58px;height:3px;background:#ff7d00"></div>
<svg class="ab" style="left:1210.8px;top:859.0px" width="32" height="32" viewBox="0 0 32 32"><rect x="16" y="7" width="12.5" height="19" fill="#fff" stroke="#d04a24" stroke-width="1.4"/><path d="M22 10A4 4 0 1 0 26 14H22Z" fill="#d04a24"/><path d="M18 19.5H26.5M18 22.5H26.5" stroke="#d04a24" stroke-width="1.2"/><path d="M2.5 5L17.5 2V30L2.5 27Z" fill="#d9472b"/><path d="M7 22V10H11Q14.5 10 14.5 13.5Q14.5 17 11 17H7" fill="none" stroke="#fff" stroke-width="2.3"/></svg>
<div class="ab" style="left:1203px;top:897px;width:47px;height:3px;background:#76b9ed"></div>
<svg class="ab" style="left:1266px;top:868px" width="18" height="12" viewBox="0 0 18 12"><path d="M1.5 10L9 2.5L16.5 10" fill="none" stroke="#e6e6e6" stroke-width="1.5"/></svg>
<svg class="ab" style="left:1297px;top:865px" width="18" height="22" viewBox="0 0 18 22"><rect x="1" y="6" width="11" height="10" rx="2" fill="none" stroke="#e6e6e6" stroke-width="1.3"/><path d="M12 9L16.5 6.5V15.5L12 13" fill="none" stroke="#e6e6e6" stroke-width="1.3"/><path d="M3 3Q7 1 11 3M3 19Q7 21 11 19" fill="none" stroke="#e6e6e6" stroke-width="1"/></svg>
<svg class="ab" style="left:1325px;top:869px" width="21" height="12" viewBox="0 0 21 12"><rect x="0.8" y="0.8" width="17.4" height="10.4" fill="none" stroke="#e6e6e6" stroke-width="1.4"/><rect x="3" y="3" width="8" height="6" fill="#e6e6e6"/><rect x="18.5" y="3.5" width="2" height="5" fill="#e6e6e6"/></svg>
<svg class="ab" style="left:1357px;top:866px" width="18" height="18" viewBox="0 0 18 18"><path d="M1 17Q1 5 15 2M4 17Q4 8 15 5.5M7 17Q7 11 15 9M10 17Q10 13.5 15 12.5" fill="none" stroke="#e6e6e6" stroke-width="1.1"/><circle cx="14.5" cy="16" r="1.5" fill="#fff"/></svg>
<svg class="ab" style="left:1385px;top:867px" width="19" height="17" viewBox="0 0 19 17"><path d="M1 5.5H4L9 1V16L4 11.5H1Z" fill="none" stroke="#e6e6e6" stroke-width="1.3"/><path d="M12 5.5L17.5 11M17.5 5.5L12 11" stroke="#e6e6e6" stroke-width="1.3"/></svg>
<div class="tx" style="left:1417.50px;top:866.82px;font-size:15px;line-height:16.755px;color:#f2f2f2;font-weight:400;font-family:'Liberation Sans',sans-serif;transform:scaleX(0.9015);transform-origin:0 0;">ENG</div>
<div class="tx" style="left:1475.93px;top:855.02px;font-size:15px;line-height:16.755px;color:#f2f2f2;font-weight:400;font-family:'Liberation Sans',sans-serif;transform:scaleX(0.9670);transform-origin:0 0;">10:19</div>
<div class="tx" style="left:1463.30px;top:878.42px;font-size:15px;line-height:16.755px;color:#f2f2f2;font-weight:400;font-family:'Liberation Sans',sans-serif;transform:scaleX(1.0268);transform-origin:0 0;">04-04-25</div>
<svg class="ab" style="left:1547px;top:864px" width="23" height="22" viewBox="0 0 23 22"><path d="M1.2 1.2H21.8V15.5H14.5L11 20L7.5 15.5H1.2Z" fill="none" stroke="#e6e6e6" stroke-width="1.4"/></svg>
<div class="ab" style="left:1594px;top:850px;width:1px;height:50px;background:#8a8a8a"></div>
</body></html>
